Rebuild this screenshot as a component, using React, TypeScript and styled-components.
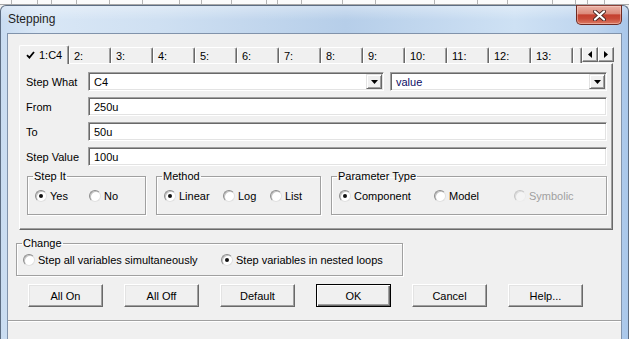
import styled, { createGlobalStyle } from 'styled-components';

const GlobalStyle = createGlobalStyle`
  html, body {
    margin: 0;
    padding: 0;
    background: #f0f0f0;
  }
  body {
    font-family: "Liberation Sans", Arial, sans-serif;
    font-size: 11px;
    color: #000;
  }
  * { box-sizing: border-box; }
`;

const Screen = styled.div`
  width: 629px;
  height: 339px;
  overflow: hidden;
  display: flex;
  flex-direction: column;
  background: #f0f0f0;
`;

const BackStrip = styled.div`
  height: 5px;
  flex: none;
  display: flex;
  background: #fbfbfb;
  border-bottom: 1px solid #a8a8a8;
`;

const BackCell = styled.div<{ $w: number }>`
  width: ${p => p.$w}px;
  flex: none;
  border-right: 1px solid #b4b4b4;
`;

const Window = styled.div`
  flex: 1;
  display: flex;
  flex-direction: column;
  border: 1px solid #5d6d82;
  border-bottom: none;
  border-radius: 6px 6px 0 0;
  padding: 0 6px;
  background:
    linear-gradient(180deg, rgba(255, 255, 255, 0.35) 0px, rgba(255, 255, 255, 0) 14px),
    linear-gradient(90deg, #c9dcf1 0%, #d9e7f6 6%, #cfe0f2 25%, #b6cee9 55%, #cee1f4 82%, #bdd4ee 95%, #a9c7ea 100%);
`;

const TitleBar = styled.div`
  height: 27px;
  flex: none;
  display: flex;
  justify-content: space-between;
  align-items: flex-start;
`;

const Title = styled.div`
  align-self: center;
  padding: 0 0 1px 1px;
  font-size: 12px;
  color: #1e1e1e;
`;

const CloseButton = styled.div`
  width: 46px;
  height: 20px;
  margin-top: -1px;
  display: flex;
  align-items: center;
  justify-content: center;
  border: 1px solid #6e2a22;
  border-top-color: #8a4038;
  border-radius: 0 0 5px 5px;
  background: linear-gradient(180deg, #eab2a5 0%, #dc8b7c 42%, #c4402f 50%, #c84a38 70%, #dc7a62 100%);
  box-shadow: inset 0 0 0 1px rgba(255, 220, 210, 0.45);
`;

const Client = styled.div`
  flex: 1;
  display: flex;
  flex-direction: column;
  background: #f0f0f0;
  border: 1px solid #8193ab;
  border-bottom: none;
  padding-top: 11px;
`;

const TabControl = styled.div`
  margin-left: 11px;
  width: 594px;
  display: flex;
  flex-direction: column;
`;

const TabStrip = styled.div`
  height: 18px;
  display: flex;
  align-items: flex-end;
`;

const Tab = styled.div<{ $w: number; $active?: boolean }>`
  position: relative;
  z-index: ${p => (p.$active ? 2 : 1)};
  width: ${p => p.$w}px;
  height: ${p => (p.$active ? 19 : 16)}px;
  margin-bottom: ${p => (p.$active ? -1 : 0)}px;
  flex: none;
  display: flex;
  align-items: center;
  gap: 4px;
  padding-left: ${p => (p.$active ? 6 : 4)}px;
  overflow: hidden;
  white-space: nowrap;
  background: #f0f0f0;
  border-top: 1px solid #fff;
  border-left: 1px solid #fff;
  border-right: 1px solid #696969;
  border-radius: 2px 2px 0 0;
  box-shadow: inset -1px 0 #a0a0a0;
`;

const TabFill = styled.div`
  flex: 1;
`;

const Spinner = styled.div`
  display: flex;
  margin-bottom: 1px;
`;

const SpinButton = styled.div`
  width: 16px;
  height: 15px;
  display: flex;
  align-items: center;
  justify-content: center;
  background: #f0f0f0;
  border: 1px solid;
  border-color: #fff #696969 #696969 #fff;
  box-shadow: inset -1px -1px #a0a0a0;
`;

const TabPanel = styled.div`
  height: 167px;
  display: flex;
  flex-direction: column;
  gap: 6px;
  padding: 8px 5px 0 6px;
  border: 1px solid;
  border-color: #fff #696969 #696969 #fff;
  box-shadow: inset -1px -1px #a0a0a0;
`;

const FieldRow = styled.div`
  height: 19px;
  display: grid;
  grid-template-columns: 62px 1fr;
  align-items: center;
`;

const FieldLabel = styled.div`
  white-space: nowrap;
`;

const ComboPair = styled.div`
  display: grid;
  grid-template-columns: 296px 1fr;
  gap: 6px;
  height: 100%;
`;

const Sunken = styled.div<{ $ink?: string }>`
  height: 100%;
  display: flex;
  align-items: center;
  background: #fff;
  color: ${p => p.$ink || '#000'};
  border: 1px solid;
  border-color: #a0a0a0 #fff #fff #a0a0a0;
  box-shadow: inset 1px 1px #696969, inset -1px -1px #e3e3e3;
  padding: 1px 1px 1px 5px;
`;

const FieldText = styled.span`
  flex: 1;
  white-space: nowrap;
`;

const DropButton = styled.div`
  width: 16px;
  height: 100%;
  flex: none;
  display: flex;
  align-items: center;
  justify-content: center;
  background: #f0f0f0;
  border: 1px solid;
  border-color: #e3e3e3 #696969 #696969 #e3e3e3;
  box-shadow: inset 1px 1px #fff, inset -1px -1px #a0a0a0;
`;

const GroupRow = styled.div`
  margin: -2px 0 0 1px;
  display: grid;
  grid-template-columns: 119px 165px 276px;
  column-gap: 10px;
`;

const Group = styled.fieldset<{ $h: number; $pb: number }>`
  margin: 0;
  min-width: 0;
  height: ${p => p.$h}px;
  padding: 0 7px ${p => p.$pb}px 7px;
  display: flex;
  align-items: center;
  border: 1px solid #a0a0a0;
  box-shadow: inset 1px 1px #fff, 1px 1px #fff;
`;

const Legend = styled.legend`
  padding: 0 1px;
  margin-left: -2px;
  font-size: 11px;
  line-height: 13px;
`;

const RadioItem = styled.div<{ $w?: number; $off?: boolean }>`
  width: ${p => (p.$w ? `${p.$w}px` : 'auto')};
  flex: none;
  height: 14px;
  display: flex;
  align-items: center;
  gap: 3px;
  white-space: nowrap;
  color: ${p => (p.$off ? '#a0a0a0' : '#000')};
`;

const RadioCircle = styled.span<{ $on?: boolean; $off?: boolean }>`
  width: 12px;
  height: 12px;
  flex: none;
  border-radius: 50%;
  display: flex;
  align-items: center;
  justify-content: center;
  border: 1px solid;
  border-color: ${p => (p.$off ? '#c4c4c4 #ececec #ececec #c4c4c4' : '#8c8c8c #e0e0e0 #e0e0e0 #8c8c8c')};
  background: ${p => (p.$off ? '#f4f4f4' : '#fff')};
  box-shadow: inset 1px 1px ${p => (p.$off ? '#dcdcdc' : '#c4c4c4')};

  &::after {
    content: '';
    width: 4px;
    height: 4px;
    border-radius: 50%;
    background: #111;
    display: ${p => (p.$on ? 'block' : 'none')};
  }
`;

const ChangeGroup = styled(Group)`
  margin: 7px 0 0 8px;
  width: 387px;
  padding-top: 3px;
  padding-left: 6px;
`;

const ChangeLegend = styled(Legend)`
  margin-left: -1px;
`;

const ButtonRow = styled.div`
  margin: 8px 0 0 20px;
  display: flex;
  gap: 21px;
`;

const Button = styled.div<{ $default?: boolean }>`
  width: 75px;
  height: 23px;
  display: flex;
  align-items: center;
  justify-content: center;
  background: #f0f0f0;
  border: 1px solid;
  border-color: ${p => (p.$default ? '#000' : '#fff #696969 #696969 #fff')};
  box-shadow: ${p =>
    p.$default
      ? 'inset 1px 1px #fff, inset -1px -1px #696969, inset -2px -2px #a0a0a0'
      : 'inset -1px -1px #a0a0a0, inset 1px 1px #e3e3e3'};
`;

const StatusBar = styled.div`
  margin-top: 13px;
  flex: 1;
  border-top: 1px solid #a0a0a0;
  box-shadow: inset 0 1px #fff;
`;

const backCells = [12, 26, 14, 25, 33, 33, 37, 22, 30, 35, 11, 24, 41, 33, 59, 43, 30, 45, 23, 12, 17, 57];

const tabs = ['2:', '3:', '4:', '5:', '6:', '7:', '8:', '9:', '10:', '11:', '12:', '13:'];

function DownArrow() {
  return (
    <svg width="7" height="4" viewBox="0 0 7 4">
      <path d="M0 0 H7 L3.5 4 Z" fill="#000" />
    </svg>
  );
}

function SideArrow({ dir }: { dir: 'left' | 'right' }) {
  return (
    <svg width="4" height="7" viewBox="0 0 4 7">
      <path d={dir === 'left' ? 'M4 0 V7 L0 3.5 Z' : 'M0 0 V7 L4 3.5 Z'} fill="#000" />
    </svg>
  );
}

function Radio({ label, on, off, w }: { label: string; on?: boolean; off?: boolean; w?: number }) {
  return (
    <RadioItem $w={w} $off={off}>
      <RadioCircle $on={on} $off={off} />
      {label}
    </RadioItem>
  );
}

export default function App() {
  return (
    <Screen>
      <GlobalStyle />
      <BackStrip>
        {backCells.map((w, i) => (
          <BackCell key={i} $w={w} />
        ))}
      </BackStrip>
      <Window>
        <TitleBar>
          <Title>Stepping</Title>
          <CloseButton>
            <svg width="13" height="11" viewBox="0 0 13 11">
              <path d="M2 1.5 L11 9.5 M11 1.5 L2 9.5" stroke="#4b2a26" strokeWidth="4" strokeLinecap="round" />
              <path d="M2 1.5 L11 9.5 M11 1.5 L2 9.5" stroke="#fff" strokeWidth="2.2" strokeLinecap="round" />
            </svg>
          </CloseButton>
        </TitleBar>
        <Client>
          <TabControl>
            <TabStrip>
              <Tab $w={50} $active>
                <svg width="9" height="8" viewBox="0 0 9 8">
                  <path d="M1 4.2 L3.4 6.6 L8 1" stroke="#000" strokeWidth="1.8" fill="none" />
                </svg>
                1:C4
              </Tab>
              {tabs.map(t => (
                <Tab key={t} $w={42}>
                  {t}
                </Tab>
              ))}
              <Tab $w={9} />
              <TabFill />
              <Spinner>
                <SpinButton>
                  <SideArrow dir="left" />
                </SpinButton>
                <SpinButton>
                  <SideArrow dir="right" />
                </SpinButton>
              </Spinner>
            </TabStrip>
            <TabPanel>
              <FieldRow>
                <FieldLabel>Step What</FieldLabel>
                <ComboPair>
                  <Sunken>
                    <FieldText>C4</FieldText>
                    <DropButton>
                      <DownArrow />
                    </DropButton>
                  </Sunken>
                  <Sunken $ink="#0c0c64">
                    <FieldText>value</FieldText>
                    <DropButton>
                      <DownArrow />
                    </DropButton>
                  </Sunken>
                </ComboPair>
              </FieldRow>
              <FieldRow>
                <FieldLabel>From</FieldLabel>
                <Sunken>
                  <FieldText>250u</FieldText>
                </Sunken>
              </FieldRow>
              <FieldRow>
                <FieldLabel>To</FieldLabel>
                <Sunken>
                  <FieldText>50u</FieldText>
                </Sunken>
              </FieldRow>
              <FieldRow>
                <FieldLabel>Step Value</FieldLabel>
                <Sunken>
                  <FieldText>100u</FieldText>
                </Sunken>
              </FieldRow>
              <GroupRow>
                <Group $h={45} $pb={6}>
                  <Legend>Step It</Legend>
                  <Radio label="Yes" on w={54} />
                  <Radio label="No" />
                </Group>
                <Group $h={45} $pb={6}>
                  <Legend>Method</Legend>
                  <Radio label="Linear" on w={59} />
                  <Radio label="Log" w={47} />
                  <Radio label="List" />
                </Group>
                <Group $h={45} $pb={6}>
                  <Legend>Parameter Type</Legend>
                  <Radio label="Component" on w={95} />
                  <Radio label="Model" w={80} />
                  <Radio label="Symbolic" off />
                </Group>
              </GroupRow>
            </TabPanel>
          </TabControl>
          <ChangeGroup $h={39} $pb={0}>
            <ChangeLegend>Change</ChangeLegend>
            <Radio label="Step all variables simultaneously" w={198} />
            <Radio label="Step variables in nested loops" on />
          </ChangeGroup>
          <ButtonRow>
            <Button>All On</Button>
            <Button>All Off</Button>
            <Button>Default</Button>
            <Button $default>OK</Button>
            <Button>Cancel</Button>
            <Button>Help...</Button>
          </ButtonRow>
          <StatusBar />
        </Client>
      </Window>
    </Screen>
  );
}
